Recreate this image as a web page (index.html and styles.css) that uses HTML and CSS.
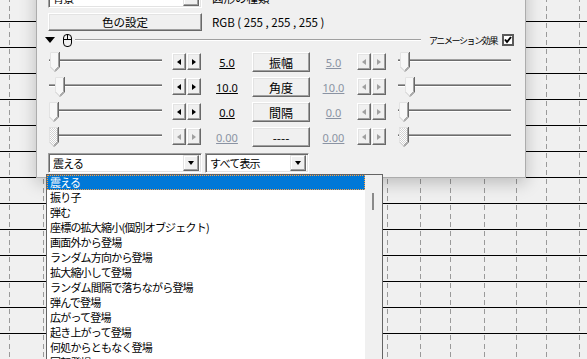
FILE: index.html
```html
<!DOCTYPE html>
<html lang="ja">
<head>
    <meta charset="UTF-8">
    <title>アニメーション効果</title>
    <link rel="stylesheet" href="styles.css">
</head>
<body>
    <svg class="defs" width="0" height="0">
        <defs>
            <pattern id="hatch" width="2" height="2" patternUnits="userSpaceOnUse">
                <rect width="2" height="2" fill="#ffffff"/>
                <rect width="1" height="1" fill="#d4d4d4"/>
                <rect x="1" y="1" width="1" height="1" fill="#d4d4d4"/>
            </pattern>
            <g id="thumb-edges">
                <polyline points="0.5,15 0.5,0.5 9.5,0.5" fill="none" stroke="#e3e3e3"/>
                <polyline points="0.5,15 5,19.5" fill="none" stroke="#c8c8c8"/>
                <polyline points="9.5,0 9.5,15 5,19.5" fill="none" stroke="#696969"/>
                <polyline points="8.5,1 8.5,14.6 5,18.2" fill="none" stroke="#a0a0a0"/>
            </g>
            <g id="thumb">
                <polygon points="0,0 10,0 10,15 5,20 0,15" fill="#f7f7f7"/>
                <use href="#thumb-edges"/>
            </g>
            <g id="thumb-off">
                <polygon points="0,0 10,0 10,15 5,20 0,15" fill="url(#hatch)"/>
                <use href="#thumb-edges"/>
            </g>
        </defs>
    </svg>

    <div class="dialog">
        <div class="row row-top">
            <div class="combo combo-wide">
                <span class="combo-text">背景</span>
                <span class="combo-btn"><span class="caret"></span></span>
            </div>
            <span class="label">図形の種類</span>
        </div>

        <div class="row row-color">
            <button class="btn btn-wide">色の設定</button>
            <span class="label">RGB ( 255 , 255 , 255 )</span>
        </div>

        <div class="row row-head">
            <span class="collapse"></span>
            <svg class="mouse" width="9" height="13" viewBox="0 0 9 13">
                <rect x="0.5" y="0.5" width="8" height="12" rx="3.5" fill="none" stroke="#000"/>
                <line x1="4.5" y1="0.5" x2="4.5" y2="5" stroke="#000"/>
                <line x1="0.5" y1="5.5" x2="8.5" y2="5.5" stroke="#000"/>
            </svg>
            <span class="rule"></span>
            <span class="small-label">アニメーション効果</span>
            <span class="check">
                <svg width="8" height="8" viewBox="0 0 8 8">
                    <polyline points="1,3.5 3,6 7,1" fill="none" stroke="#000" stroke-width="2"/>
                </svg>
            </span>
        </div>

        <div class="params">
            <div class="param">
                <div class="slider"><span class="track"></span><svg class="thumb" style="left:2px" width="10" height="20"><use href="#thumb"/></svg></div>
                <div class="spin"><span class="arrow"><span class="tri tri-left"></span></span><span class="arrow"><span class="tri tri-right"></span></span></div>
                <span class="value">5.0</span>
                <button class="btn">振幅</button>
                <span class="value dim">5.0</span>
                <div class="spin dim"><span class="arrow"><span class="tri tri-left"></span></span><span class="arrow"><span class="tri tri-right"></span></span></div>
                <div class="slider slider-right"><span class="track"></span><svg class="thumb" style="left:3px" width="10" height="20"><use href="#thumb"/></svg></div>
            </div>
            <div class="param">
                <div class="slider"><span class="track"></span><svg class="thumb" style="left:7px" width="10" height="20"><use href="#thumb"/></svg></div>
                <div class="spin"><span class="arrow"><span class="tri tri-left"></span></span><span class="arrow"><span class="tri tri-right"></span></span></div>
                <span class="value">10.0</span>
                <button class="btn">角度</button>
                <span class="value dim">10.0</span>
                <div class="spin dim"><span class="arrow"><span class="tri tri-left"></span></span><span class="arrow"><span class="tri tri-right"></span></span></div>
                <div class="slider slider-right"><span class="track"></span><svg class="thumb" style="left:8px" width="10" height="20"><use href="#thumb"/></svg></div>
            </div>
            <div class="param">
                <div class="slider"><span class="track"></span><svg class="thumb" style="left:1px" width="10" height="20"><use href="#thumb"/></svg></div>
                <div class="spin"><span class="arrow"><span class="tri tri-left"></span></span><span class="arrow"><span class="tri tri-right"></span></span></div>
                <span class="value">0.0</span>
                <button class="btn">間隔</button>
                <span class="value dim">0.0</span>
                <div class="spin dim"><span class="arrow"><span class="tri tri-left"></span></span><span class="arrow"><span class="tri tri-right"></span></span></div>
                <div class="slider slider-right"><span class="track"></span><svg class="thumb" style="left:2px" width="10" height="20"><use href="#thumb"/></svg></div>
            </div>
            <div class="param">
                <div class="slider"><span class="track"></span><svg class="thumb" style="left:1px" width="10" height="20"><use href="#thumb-off"/></svg></div>
                <div class="spin dim"><span class="arrow"><span class="tri tri-left"></span></span><span class="arrow"><span class="tri tri-right"></span></span></div>
                <span class="value dim">0.00</span>
                <button class="btn">----</button>
                <span class="value dim">0.00</span>
                <div class="spin dim"><span class="arrow"><span class="tri tri-left"></span></span><span class="arrow"><span class="tri tri-right"></span></span></div>
                <div class="slider slider-right"><span class="track"></span><svg class="thumb" style="left:2px" width="10" height="20"><use href="#thumb-off"/></svg></div>
            </div>
        </div>

        <div class="row row-effects">
            <div class="combo combo-wide">
                <span class="combo-text">震える</span>
                <span class="combo-btn"><span class="caret"></span></span>
            </div>
            <div class="combo combo-filter">
                <span class="combo-text">すべて表示</span>
                <span class="combo-btn"><span class="caret"></span></span>
            </div>
        </div>
    </div>

    <div class="dropdown">
        <ul class="list">
            <li class="selected">震える</li>
            <li>振り子</li>
            <li>弾む</li>
            <li>座標の拡大縮小(個別オブジェクト)</li>
            <li>画面外から登場</li>
            <li>ランダム方向から登場</li>
            <li>拡大縮小して登場</li>
            <li>ランダム間隔で落ちながら登場</li>
            <li>弾んで登場</li>
            <li>広がって登場</li>
            <li>起き上がって登場</li>
            <li>何処からともなく登場</li>
            <li>回転登場</li>
        </ul>
        <div class="scrollbar"><span class="scroll-thumb"></span></div>
    </div>
</body>
</html>
```

FILE: styles.css
```css
html, body {
    margin: 0;
    padding: 0;
}
body {
    width: 587px;
    height: 359px;
    overflow: hidden;
    position: relative;
    font-family: 'Noto Sans CJK JP', 'Noto Sans', sans-serif;
    font-size: 11px;
    color: #000000;
    background-color: #f0f0f0;
    background-image:
        linear-gradient(#000000 0 1px, transparent 1px),
        linear-gradient(transparent 0 2px, #9a9a9a 2px 7px, transparent 7px 11px, #9a9a9a 11px 16px, transparent 16px 19px, #9a9a9a 19px 24px, transparent 24px),
        linear-gradient(transparent 0 2px, #9a9a9a 2px 7px, transparent 7px 11px, #9a9a9a 11px 16px, transparent 16px 19px, #9a9a9a 19px 24px, transparent 24px),
        linear-gradient(transparent 0 2px, #9a9a9a 2px 7px, transparent 7px 11px, #9a9a9a 11px 16px, transparent 16px 19px, #9a9a9a 19px 24px, transparent 24px),
        linear-gradient(transparent 0 2px, #9a9a9a 2px 7px, transparent 7px 11px, #9a9a9a 11px 16px, transparent 16px 19px, #9a9a9a 19px 24px, transparent 24px),
        linear-gradient(transparent 0 2px, #9a9a9a 2px 7px, transparent 7px 11px, #9a9a9a 11px 16px, transparent 16px 19px, #9a9a9a 19px 24px, transparent 24px),
        linear-gradient(transparent 0 2px, #9a9a9a 2px 7px, transparent 7px 11px, #9a9a9a 11px 16px, transparent 16px 19px, #9a9a9a 19px 24px, transparent 24px),
        linear-gradient(transparent 0 2px, #9a9a9a 2px 7px, transparent 7px 11px, #9a9a9a 11px 16px, transparent 16px 19px, #9a9a9a 19px 24px, transparent 24px),
        linear-gradient(transparent 0 2px, #9a9a9a 2px 7px, transparent 7px 11px, #9a9a9a 11px 16px, transparent 16px 19px, #9a9a9a 19px 24px, transparent 24px),
        linear-gradient(transparent 0 2px, #9a9a9a 2px 7px, transparent 7px 11px, #9a9a9a 11px 16px, transparent 16px 19px, #9a9a9a 19px 24px, transparent 24px);
    background-size: 100% 26px, 1px 26px, 1px 26px, 1px 26px, 1px 26px, 1px 26px, 1px 26px, 1px 26px, 1px 26px, 1px 26px;
    background-position: 0 21px, 9px 21px, 43px 21px, 387px 21px, 420px 21px, 450px 21px, 484px 21px, 516px 21px, 546px 21px, 579px 21px;
    background-repeat: repeat-y;
}
.defs {
    position: absolute;
}

/* dialog window */
.dialog {
    position: absolute;
    left: 36px;
    top: -20px;
    width: 490px;
    height: 198px;
    box-sizing: border-box;
    padding: 7px 11px 0 11px;
    background-color: #f0f0f0;
    border: 1px solid #acacac;
    box-shadow: 0 5px 16px rgba(0, 0, 0, 0.22);
}
.row {
    display: flex;
    align-items: center;
}
.row-top {
    height: 20px;
}
.row-color {
    height: 18px;
    margin-top: 5px;
}
.row-head {
    height: 14px;
    margin-top: 2px;
    margin-left: -3px;
}
.row-effects {
    height: 20px;
    margin-top: 6px;
    gap: 3px;
}
.label {
    margin-left: 10px;
    font-size: 11.5px;
    white-space: nowrap;
}

/* buttons */
.btn {
    box-sizing: border-box;
    height: 20px;
    padding: 0;
    font-family: inherit;
    font-size: 12px;
    color: #000000;
    background-color: #f0f0f0;
    border: 1px solid;
    border-color: #ffffff #696969 #696969 #ffffff;
    box-shadow: inset -1px -1px #a0a0a0, inset 1px 1px #e3e3e3;
}
.btn-wide {
    width: 154px;
    height: 18px;
    font-size: 11.5px;
    line-height: 14px;
}

/* combo boxes */
.combo {
    box-sizing: border-box;
    height: 20px;
    display: flex;
    align-items: center;
    background-color: #ffffff;
    border: 1px solid;
    border-color: #a0a0a0 #ffffff #ffffff #a0a0a0;
    box-shadow: inset 1px 1px #696969, inset -1px -1px #e3e3e3;
    padding: 1px 2px 2px 1px;
}
.combo-wide {
    width: 154px;
}
.combo-filter {
    width: 104px;
}
.combo-text {
    flex: 1;
    padding-left: 3px;
    white-space: nowrap;
    font-size: 11px;
    letter-spacing: -0.8px;
}
.combo-btn {
    width: 16px;
    height: 16px;
    box-sizing: border-box;
    display: flex;
    align-items: center;
    justify-content: center;
    background-color: #f0f0f0;
    border: 1px solid;
    border-color: #e3e3e3 #696969 #696969 #e3e3e3;
    box-shadow: inset -1px -1px #a0a0a0, inset 1px 1px #ffffff;
}
.caret {
    width: 0;
    height: 0;
    border-left: 3.5px solid transparent;
    border-right: 3.5px solid transparent;
    border-top: 4px solid #000000;
}

/* header line */
.collapse {
    width: 0;
    height: 0;
    border-left: 5px solid transparent;
    border-right: 5px solid transparent;
    border-top: 6px solid #000000;
}
.mouse {
    margin-left: 8px;
}
.rule {
    flex: 1;
    height: 2px;
    margin: 0 8px 0 3px;
    background: linear-gradient(#a0a0a0 0 1px, #ffffff 1px);
}
.small-label {
    font-size: 9px;
    letter-spacing: -1.4px;
    white-space: nowrap;
}
.check {
    box-sizing: border-box;
    width: 12px;
    height: 12px;
    margin-left: 5px;
    display: flex;
    align-items: center;
    justify-content: center;
    background-color: #ffffff;
    border: 2px solid #5a5a5a;
}

/* parameter rows */
.params {
    margin-top: 5px;
    display: flex;
    flex-direction: column;
    gap: 5px;
}
.param {
    height: 20px;
    display: grid;
    grid-template-columns: 124px 30px 50px 58px 47px 30px 126px;
    align-items: center;
}
.slider {
    position: relative;
    width: 116px;
    height: 20px;
}
.slider-right {
    margin-left: 10px;
}
.track {
    position: absolute;
    left: 1px;
    right: 2px;
    top: 7px;
    height: 3px;
    background: linear-gradient(#a0a0a0 0 1px, #6d6d6d 1px 2px, #ffffff 2px);
}
.thumb {
    position: absolute;
    top: 0;
}
.spin {
    display: flex;
    gap: 1px;
    align-self: start;
    margin-top: 1px;
}
.arrow {
    box-sizing: border-box;
    width: 14px;
    height: 17px;
    display: flex;
    align-items: center;
    justify-content: center;
    background-color: #f0f0f0;
    border: 1px solid;
    border-color: #ffffff #696969 #696969 #ffffff;
    box-shadow: inset -1px -1px #a0a0a0, inset 1px 1px #e3e3e3;
}
.tri {
    width: 0;
    height: 0;
    border-top: 3.5px solid transparent;
    border-bottom: 3.5px solid transparent;
}
.tri-left {
    border-right: 4px solid #000000;
}
.tri-right {
    border-left: 4px solid #000000;
}
.spin.dim .tri-left {
    border-right-color: #a0a0a0;
}
.spin.dim .tri-right {
    border-left-color: #a0a0a0;
}
.value {
    text-align: center;
    text-decoration: underline;
    font-family: 'Noto Sans', sans-serif;
    font-size: 11px;
}
.value.dim {
    color: #8a93a3;
}

/* dropdown list */
.dropdown {
    position: absolute;
    left: 46px;
    top: 174px;
    width: 337px;
    height: 200px;
    box-sizing: border-box;
    display: flex;
    background-color: #ffffff;
    border: 1px solid #646464;
}
.list {
    flex: 1;
    margin: 0;
    padding: 0;
    list-style: none;
}
.list li {
    height: 15px;
    line-height: 15px;
    padding-left: 3px;
    font-size: 11px;
    letter-spacing: -0.8px;
    white-space: nowrap;
}
.list li.selected {
    color: #ffffff;
    background-color: #0078d7;
    outline: 1px dotted #ffa040;
    outline-offset: -1px;
}
.scrollbar {
    position: relative;
    width: 17px;
    background-color: #f0f0f0;
}
.scroll-thumb {
    position: absolute;
    left: 7px;
    top: 18px;
    width: 2px;
    height: 17px;
    background-color: #8a8a8a;
}
```
